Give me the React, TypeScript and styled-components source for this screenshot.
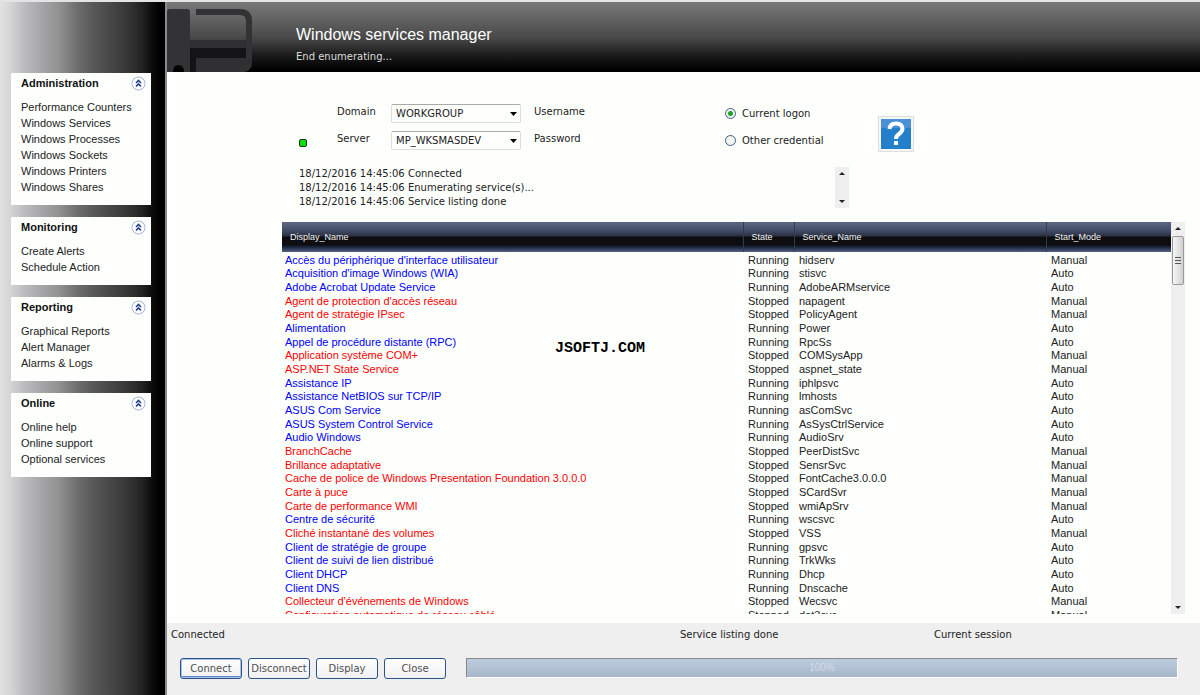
import React from "react";
import styled, { createGlobalStyle } from "styled-components";

const ui = `"DejaVu Sans", Verdana, sans-serif`;
const arial = `"Liberation Sans", Arial, sans-serif`;

const Global = createGlobalStyle`
  *, *::before, *::after { box-sizing: border-box; }
  body { margin: 0; background: #fdfffd; color: #222; font: 10px/14px ${ui}; }
  button, input, select, textarea { font: inherit; color: inherit; }
`;

const Page = styled.div`
  display: grid;
  grid-template-columns: 167px minmax(0, 1fr);
  min-height: 100vh;
  border-top: 2px solid #e4e4e4;
  border-bottom: 1px solid #f6f6f6;
  position: relative;
`;

const Sidebar = styled.nav`
  display: flex;
  flex-direction: column;
  gap: 12px;
  padding: 71px 14px 0 11px;
  border-right: 2px solid #8a8a90;
  background: linear-gradient(90deg, #e0e2e0 0, #d4d4d4 11px, #bcbcbe 24px, #a8a8aa 40px, #8f8f90 60px, #6e6e6e 77px, #565656 95px, #454545 113px, #333 130px, #202020 143px, #0c0c0e 152px, #000 160px);
`;

const Panel = styled.section`
  background: #fdfffd;
  padding: 0 5px 10px 10px;
`;

const PanelHead = styled.h2`
  display: flex;
  align-items: center;
  justify-content: space-between;
  margin: 0 0 5px;
  height: 21px;
  font: bold 11px/21px ${arial};
  color: #111;
`;

const Collapse = styled.button`
  display: flex;
  width: 15px;
  height: 15px;
  padding: 0;
  border: 0;
  background: none;
`;

const Links = styled.ul`
  margin: 0;
  padding: 0;
  list-style: none;
`;

const NavLink = styled.a`
  display: block;
  font: 11px/16px ${arial};
  color: #222;
  text-decoration: none;
  white-space: nowrap;
`;

const Main = styled.main`
  display: flex;
  flex-direction: column;
  min-width: 0;
`;

const Banner = styled.header`
  display: flex;
  gap: 43px;
  height: 70px;
  color: #fff;
  background: linear-gradient(180deg, #787878 0, #666 14px, #484848 36px, #1e1e1e 52px, #000 68px);
`;

const Title = styled.h1`
  margin: 23px 0 5px;
  font: 16px/20px ${arial};
`;

const Subtitle = styled.p`
  margin: 0;
  color: #ddd;
`;

const Form = styled.form`
  display: grid;
  grid-template-columns: 38px 54px 130px 13px 191px 153px 36px;
  grid-template-rows: 19px 19px;
  row-gap: 8px;
  margin: 32px 0 0 132px;
`;

const Lamp = styled.span`
  grid-row: 2;
  grid-column: 1;
  align-self: end;
  width: 8px;
  height: 8px;
  margin-bottom: 3px;
  border: 1px solid #123512;
  border-radius: 2px;
  background: #0be00b;
`;

const Label = styled.label<{ $col: number; $row: number }>`
  grid-column: ${(p) => p.$col};
  grid-row: ${(p) => p.$row};
  line-height: 16px;
`;

const Combo = styled.select<{ $row: number }>`
  grid-column: 3;
  grid-row: ${(p) => p.$row};
  appearance: none;
  height: 19px;
  padding: 0 16px 0 4px;
  border: 1px solid #ddd;
  border-top-color: #aaa;
  border-radius: 2px;
  background: #fdfffd url("data:image/svg+xml,%3Csvg xmlns='http://www.w3.org/2000/svg' width='7' height='4'%3E%3Cpath d='M0 0h7L3.5 4z'/%3E%3C/svg%3E") no-repeat right 3px center;
`;

const Choice = styled.label<{ $row: number }>`
  grid-column: 6;
  grid-row: ${(p) => p.$row};
  display: flex;
  align-items: center;
  gap: 6px;
`;

const Radio = styled.input`
  appearance: none;
  width: 11px;
  height: 11px;
  margin: 0;
  border: 1px solid #3d5f86;
  border-radius: 50%;
  background: #f2f4f2;
  &:checked { background: radial-gradient(circle, #21a121 0 2px, #f2f4f2 3px); }
`;

const Help = styled.button`
  grid-column: 7;
  grid-row: 1 / 3;
  width: 36px;
  height: 36px;
  margin-top: 12px;
  padding: 2px;
  border: 1px solid #ddd;
  background: #f6f6f6;
  svg { display: block; }
`;

const LogBox = styled.div`
  display: flex;
  justify-content: space-between;
  width: 550px;
  height: 41px;
  margin: 17px 0 0 132px;
`;

const Log = styled.ol`
  margin: 0;
  padding: 0;
  list-style: none;
  white-space: nowrap;
`;

const Scroller = styled.div`
  display: flex;
  flex-direction: column;
  justify-content: space-between;
  align-items: center;
  width: 14px;
  flex: none;
  padding: 5px 0;
  background: #efefef;
`;

const Thumb = styled.div`
  display: flex;
  align-items: center;
  justify-content: center;
  width: 12px;
  height: 49px;
  margin: 6px 0 auto;
  border: 1px solid #999;
  border-radius: 2px;
  background: linear-gradient(90deg, #f6f6f6, #d0d0d0);
`;

const ListArea = styled.div`
  display: flex;
  height: 392px;
  margin: 14px 15px 0 115px;
  overflow: hidden;
`;

const Services = styled.table`
  flex: 1;
  table-layout: fixed;
  border-collapse: collapse;
  align-self: flex-start;
  font: 11px/13px ${arial};
  white-space: nowrap;
  th {
    height: 30px;
    padding: 0 8px;
    font: 9px/30px ${arial};
    text-align: left;
    color: #f4f4f4;
  }
  th + th { border-left: 1px solid #333a4c; }
  thead { background: linear-gradient(180deg, #5d6784 0, #454e68 8px, #2b3142 14px, #0c0c0f 15px, #0e0e12 23px, #22304f 26px, #55637f 30px); }
`;

const Col = styled.col<{ $width?: string }>`
  width: ${(p) => p.$width ?? "auto"};
`;

const Gap = styled.tr`
  height: 1px;
  td { padding: 0; }
`;

const Row = styled.tr<{ $running: boolean }>`
  height: 14px;
  &:nth-child(3n) { height: 13px; }
  td { padding: 0 5px; }
  td:first-child { padding: 0 3px; color: ${(p) => (p.$running ? "#0000ff" : "#ff0000")}; }
`;

const Footer = styled.footer`
  flex: 1;
  display: flex;
  flex-direction: column;
  gap: 16px;
  margin-top: 9px;
  padding: 5px 22px 16px 4px;
  background: #efefef;
`;

const Status = styled.div`
  display: grid;
  grid-template-columns: 509fr 254fr 244fr;
`;

const Actions = styled.div`
  display: flex;
  align-items: flex-start;
  gap: 6px;
  padding-left: 9px;
`;

const Action = styled.button<{ $primary?: boolean }>`
  width: 62px;
  height: 21px;
  padding: 0;
  border: 1px solid #2a5488;
  border-radius: 3px;
  color: #505050;
  background: linear-gradient(180deg, #fff, #f0f0f2);
  box-shadow: ${(p) => (p.$primary ? "inset 0 0 0 1px #a9c2ec, inset 0 -2px 0 #5d86cc" : "none")};
`;

const Progress = styled.div`
  flex: 1;
  height: 20px;
  margin-left: 14px;
  border: 1px solid #fff;
  border-top-color: #888;
  border-left-color: #888;
  background: linear-gradient(180deg, #bccddf, #a9b6ca);
  color: #d3dbe6;
  font: 10px/18px ${arial};
  text-align: center;
`;

const Watermark = styled.div`
  position: absolute;
  left: 50%;
  top: 50%;
  transform: translate(-50%, -50%);
  font: bold 15px/16px "Liberation Mono", monospace;
  color: #000;
`;

const Chevrons = () => (
  <svg width="15" height="15" viewBox="0 0 15 15" fill="none">
    <circle cx="7.5" cy="7.5" r="6.5" fill="#fff" stroke="#a9b4d4" />
    <path d="M5 7l2.5-2.5L10 7M5 10.5L7.500 8l2.500 2.500" stroke="#1c3f94" strokeWidth="1.600" />
  </svg>
);

const Arrow = ({ up = false }) => (
  <svg width="6" height="3" viewBox="0 0 6 3">
    <path d={up ? "M0 3L3 0l3 3z" : "M0 0h6L3 3z"} fill="#222" />
  </svg>
);

const Mark = () => (
  <svg width="86" height="70" viewBox="0 0 86 70">
    <path d="M0 10q0-3 3-3h17q3 0 3 3v60H17q0-7-5.500-7T6 70H0z" fill="#333234" />
    <path d="M23 38H79V46H23z" fill="#302f31" />
    <path d="M23 46H79V56H29V70H23z" fill="#141315" />
    <path d="M29 10H73q9 0 9 9V60" fill="none" stroke="#333234" strokeWidth="6" />
    <path d="M29 56H85V61q0 7-7 9H29z" fill="#302f31" />
  </svg>
);

const groups = [
  { name: "Administration", items: ["Performance Counters", "Windows Services", "Windows Processes", "Windows Sockets", "Windows Printers", "Windows Shares"] },
  { name: "Monitoring", items: ["Create Alerts", "Schedule Action"] },
  { name: "Reporting", items: ["Graphical Reports", "Alert Manager", "Alarms & Logs"] },
  { name: "Online", items: ["Online help", "Online support", "Optional services"] },
];

const services: [string, string, boolean, boolean][] = [
  ["Accès du périphérique d'interface utilisateur", "hidserv", true, false],
  ["Acquisition d'image Windows (WIA)", "stisvc", true, true],
  ["Adobe Acrobat Update Service", "AdobeARMservice", true, true],
  ["Agent de protection d'accès réseau", "napagent", false, false],
  ["Agent de stratégie IPsec", "PolicyAgent", false, false],
  ["Alimentation", "Power", true, true],
  ["Appel de procédure distante (RPC)", "RpcSs", true, true],
  ["Application système COM+", "COMSysApp", false, false],
  ["ASP.NET State Service", "aspnet_state", false, false],
  ["Assistance IP", "iphlpsvc", true, true],
  ["Assistance NetBIOS sur TCP/IP", "lmhosts", true, true],
  ["ASUS Com Service", "asComSvc", true, true],
  ["ASUS System Control Service", "AsSysCtrlService", true, true],
  ["Audio Windows", "AudioSrv", true, true],
  ["BranchCache", "PeerDistSvc", false, false],
  ["Brillance adaptative", "SensrSvc", false, false],
  ["Cache de police de Windows Presentation Foundation 3.0.0.0", "FontCache3.0.0.0", false, false],
  ["Carte à puce", "SCardSvr", false, false],
  ["Carte de performance WMI", "wmiApSrv", false, false],
  ["Centre de sécurité", "wscsvc", true, true],
  ["Cliché instantané des volumes", "VSS", false, false],
  ["Client de stratégie de groupe", "gpsvc", true, true],
  ["Client de suivi de lien distribué", "TrkWks", true, true],
  ["Client DHCP", "Dhcp", true, true],
  ["Client DNS", "Dnscache", true, true],
  ["Collecteur d'événements de Windows", "Wecsvc", false, false],
  ["Configuration automatique de réseau câblé", "dot3svc", false, false],
];

export default function App() {
  return (
    <Page>
      <Global />
      <Sidebar>
        {groups.map((g) => (
          <Panel key={g.name}>
            <PanelHead>
              {g.name}
              <Collapse type="button" aria-label={`Collapse ${g.name}`}><Chevrons /></Collapse>
            </PanelHead>
            <Links>
              {g.items.map((i) => <li key={i}><NavLink href="#">{i}</NavLink></li>)}
            </Links>
          </Panel>
        ))}
      </Sidebar>
      <Main>
        <Banner>
          <Mark />
          <div>
            <Title>Windows services manager</Title>
            <Subtitle>End enumerating...</Subtitle>
          </div>
        </Banner>
        <Form>
          <Lamp />
          <Label $col={2} $row={1} htmlFor="domain">Domain</Label>
          <Combo $row={1} id="domain"><option>WORKGROUP</option></Combo>
          <Label $col={5} $row={1} as="span">Username</Label>
          <Choice $row={1}><Radio type="radio" name="logon" defaultChecked />Current logon</Choice>
          <Label $col={2} $row={2} htmlFor="server">Server</Label>
          <Combo $row={2} id="server"><option>MP_WKSMASDEV</option></Combo>
          <Label $col={5} $row={2} as="span">Password</Label>
          <Choice $row={2}><Radio type="radio" name="logon" />Other credential</Choice>
          <Help type="button" aria-label="Help">
            <svg width="30" height="30" viewBox="0 0 30 30" fill="none">
              <rect width="30" height="30" fill="#2580cc" />
              <rect width="30" height="9" fill="#4a90d8" />
              <path d="M8.500 10q.5-5.500 6.500-5.500t6.500 5q0 3-3.500 5.500-3 2-3 5" stroke="#fff" strokeWidth="4" />
              <rect x="13" y="22" width="4" height="4" fill="#fff" />
            </svg>
          </Help>
        </Form>
        <LogBox>
          <Log>
            <li>18/12/2016 14:45:06 Connected</li>
            <li>18/12/2016 14:45:06 Enumerating service(s)...</li>
            <li>18/12/2016 14:45:06 Service listing done</li>
          </Log>
          <Scroller><Arrow up /><Arrow /></Scroller>
        </LogBox>
        <ListArea>
          <Services>
            <colgroup>
              <Col />
              <Col $width="51px" />
              <Col $width="252px" />
              <Col $width="125px" />
            </colgroup>
            <thead>
              <tr><th>Display_Name</th><th>State</th><th>Service_Name</th><th>Start_Mode</th></tr>
            </thead>
            <tbody>
              <Gap><td colSpan={4} /></Gap>
              {services.map(([name, id, running, auto]) => (
                <Row key={id} $running={running}>
                  <td>{name}</td>
                  <td>{running ? "Running" : "Stopped"}</td>
                  <td>{id}</td>
                  <td>{auto ? "Auto" : "Manual"}</td>
                </Row>
              ))}
            </tbody>
          </Services>
          <Scroller>
            <Arrow up />
            <Thumb>
              <svg width="6" height="7" viewBox="0 0 6 7"><path d="M0 0h6v1H0zM0 3h6v1H0zM0 6h6v1H0z" fill="#555" /></svg>
            </Thumb>
            <Arrow />
          </Scroller>
        </ListArea>
        <Footer>
          <Status><span>Connected</span><span>Service listing done</span><span>Current session</span></Status>
          <Actions>
            <Action type="button" $primary>Connect</Action>
            <Action type="button">Disconnect</Action>
            <Action type="button">Display</Action>
            <Action type="button">Close</Action>
            <Progress role="progressbar" aria-valuenow={100}>100%</Progress>
          </Actions>
        </Footer>
      </Main>
      <Watermark>JSOFTJ.COM</Watermark>
    </Page>
  );
}
